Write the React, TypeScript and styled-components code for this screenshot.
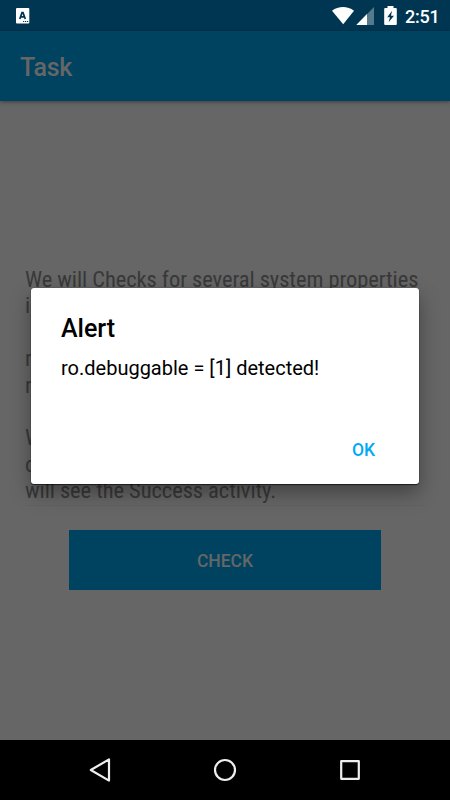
import React from "react";
import styled, { createGlobalStyle } from "styled-components";

const GlobalStyle = createGlobalStyle`
  * { box-sizing: border-box; }
  body { margin: 0; background: #666; }
`;

const Screen = styled.div`
  position: relative;
  width: 450px;
  height: 800px;
  overflow: hidden;
  display: flex;
  flex-direction: column;
  background: #666;
  font-family: Roboto, sans-serif;
`;

const StatusBar = styled.header`
  height: 31px;
  flex: none;
  display: flex;
  align-items: center;
  background: #003652;
  color: #fff;
`;

const StatusIcons = styled.svg`
  display: block;
  flex: none;
`;

const Clock = styled.span`
  margin-left: 7px;
  padding-top: 2px;
  font-size: 18px;
  font-weight: 500;
  line-height: 22px;
  letter-spacing: -0.2px;
`;

const AppBar = styled.div`
  height: 70px;
  flex: none;
  display: flex;
  align-items: center;
  padding: 2px 20px 0;
  background: #004361;
  color: #666;
  font-size: 25px;
  font-weight: 500;
  letter-spacing: -0.2px;
  box-shadow: 0 1px 4px rgba(0, 0, 0, 0.4);
`;

const Content = styled.main`
  flex: 1;
  display: flex;
  flex-direction: column;
  align-items: center;
  padding-top: 165px;
`;

const Description = styled.div`
  align-self: flex-start;
  width: 400px;
  height: 240px;
  margin-left: 25px;
  border-bottom: 1px solid #626262;
  color: #393939;
  font-family: "Roboto Condensed", Roboto, sans-serif;
  font-stretch: 75%;
  font-size: 22.5px;
  letter-spacing: -0.07px;
  line-height: 26.4px;
  white-space: pre;
`;

const CheckButton = styled.button`
  width: 312px;
  height: 60px;
  margin-top: 24px;
  padding: 2px 0 0;
  border: 0;
  background: #004361;
  color: #666;
  font: 500 17.5px Roboto, sans-serif;
`;

const NavBar = styled.nav`
  height: 60px;
  flex: none;
  display: flex;
  align-items: center;
  justify-content: center;
  gap: 95px;
  background: #000;
`;

const NavIcon = styled.svg`
  width: 30px;
  height: 30px;
  fill: none;
  stroke: #eee;
  stroke-width: 2.2;
  stroke-linejoin: round;
`;

const Dialog = styled.section`
  position: absolute;
  left: 31px;
  top: 287.5px;
  width: 387.5px;
  height: 196.5px;
  display: flex;
  flex-direction: column;
  padding: 26px 30px 20.5px;
  border-radius: 3px;
  background: #fff;
  color: #000;
  box-shadow: 0 0 1px rgba(0, 0, 0, 0.6), 0 1px 1px rgba(0, 0, 0, 0.6), 0 9px 20px rgba(0, 0, 0, 0.36);
`;

const DialogTitle = styled.h1`
  margin: 0;
  font-size: 25px;
  font-weight: 500;
  line-height: 30px;
`;

const Message = styled.p`
  margin: 12.5px 0 0;
  font-size: 20px;
  line-height: 24px;
`;

const OkButton = styled.button`
  align-self: flex-end;
  margin-top: auto;
  padding: 0 13.5px 2px;
  border: 0;
  background: none;
  color: #03a9f4;
  font: 500 17.5px/24px Roboto, sans-serif;
`;

const description = [
  "We will Checks for several system properties",
  "i",
  "",
  "r",
  "r",
  "",
  "W",
  "o",
  "will see the Success activity.",
].join("\n");

export default function App() {
  return (
    <>
      <GlobalStyle />
      <Screen>
        <StatusBar>
          <StatusIcons width="398" height="31" viewBox="0 0 398 31">
            <rect x="16" y="8" width="13.3" height="15.5" rx="1" fill="#fff" />
            <path d="M19.8 19 22 12.6h1L25.3 19M20.7 16.8h3.6" fill="none" stroke="#003652" strokeWidth="1.7" />
            <path d="M23 21.5h1.2m.8 0h1.2m.8 0h1.2" stroke="#003652" strokeWidth="1.2" />
            <path d="M332 10.7C338.5 5.7 347.5 5.7 354 10.7L343.2 24.3Z" fill="#fff" />
            <path d="M374 7V25H356.3Z" fill="#547a8d" />
            <path d="M367 14V25H356.3Z" fill="#fff" />
            <path d="M387.5 6h6v2h2.3q1 0 1 1v15q0 1-1 1h-10.6q-1 0-1-1V9q0-1 1-1h2.3Z" fill="#fff" />
            <path d="M392 10.8 387.3 17.3h2.7L388.6 22.3 394 15.8h-3Z" fill="#003652" />
          </StatusIcons>
          <Clock>2:51</Clock>
        </StatusBar>
        <AppBar>Task</AppBar>
        <Content>
          <Description>{description}</Description>
          <CheckButton>CHECK</CheckButton>
        </Content>
        <NavBar>
          <NavIcon viewBox="0 0 30 30">
            <path d="M5.8 15 24 4.4V25.6Z" />
          </NavIcon>
          <NavIcon viewBox="0 0 30 30">
            <circle cx="15" cy="15" r="10" />
          </NavIcon>
          <NavIcon viewBox="0 0 30 30">
            <rect x="6.2" y="6.2" width="17.6" height="17.6" />
          </NavIcon>
        </NavBar>
        <Dialog role="dialog">
          <DialogTitle>Alert</DialogTitle>
          <Message>ro.debuggable = [1] detected!</Message>
          <OkButton>OK</OkButton>
        </Dialog>
      </Screen>
    </>
  );
}
